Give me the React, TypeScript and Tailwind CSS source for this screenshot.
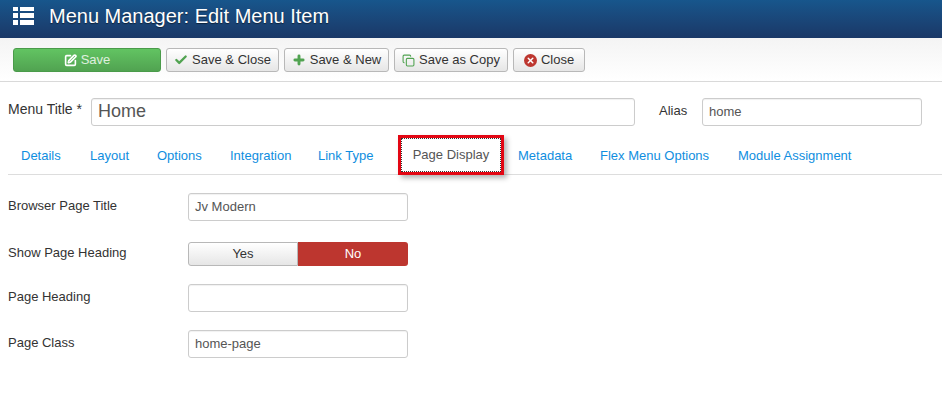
import { Check, Copy, Plus, SquarePen, X } from "lucide-react"

const font = { fontFamily: '"Liberation Sans", Arial, sans-serif' }

function ToolButton({ icon, label, className }: { icon: React.ReactNode; label: string; className: string }) {
  return (
    <button className={`h-6 flex items-center justify-center gap-1 rounded-[3px] border border-[#b8b8b8] bg-gradient-to-b from-white to-[#e6e6e6] text-[13px] text-[#333] ${className}`}>
      {icon}
      <span>{label}</span>
    </button>
  )
}

function Row({ label, children, className }: { label: string; children: React.ReactNode; className: string }) {
  return (
    <div className={`flex items-center ${className}`}>
      <label className="w-[180px] text-[13px] text-[#333] -mt-[3px]">{label}</label>
      {children}
    </div>
  )
}

function Field({ value, className }: { value: string; className: string }) {
  return (
    <div className={`h-7 flex items-center rounded-[3px] border border-[#ccc] bg-white shadow-[inset_0_1px_1px_rgba(0,0,0,0.06)] px-[6px] text-[#555] ${className}`}>
      {value}
    </div>
  )
}

const tabs = [
  { label: "Details", w: "w-[69px]" },
  { label: "Layout", w: "w-[67px]" },
  { label: "Options", w: "w-[73px]" },
  { label: "Integration", w: "w-[88px]" },
  { label: "Link Type", w: "w-[85px]" },
]

export default function App() {
  return (
    <div className="w-[942px] h-[401px] bg-white overflow-hidden" style={font}>
      <header className="h-[38px] flex items-center bg-gradient-to-b from-[#17568c] to-[#1a3867] pl-[13px]">
        <svg width="21" height="18" viewBox="0 0 21 18" className="-mt-[6px]" fill="#fff">
          <rect x="0" y="0" width="5" height="4" />
          <rect x="7" y="0" width="14" height="4" />
          <rect x="0" y="6" width="5" height="5" />
          <rect x="7" y="6" width="14" height="5" />
          <rect x="0" y="13" width="5" height="5" />
          <rect x="7" y="13" width="14" height="5" />
        </svg>
        <h1 className="ml-[15px] -mt-[6px] text-[20px] text-white [text-shadow:0_1px_1px_rgba(0,0,0,0.5)]">Menu Manager: Edit Menu Item</h1>
      </header>

      <div className="h-[44px] flex items-center gap-[5px] pl-[13px] pt-[1px] bg-gradient-to-b from-[#f4f4f4] to-white border-b border-[#d9d9d9]">
        <button className="w-[148px] h-6 flex items-center justify-center gap-1 rounded-[3px] border border-[#4a9b4a] bg-gradient-to-b from-[#62c462] to-[#51a351] text-[13px] text-white/80">
          <SquarePen size={13} strokeWidth={3} color="#fff" />
          <span>Save</span>
        </button>
        <ToolButton className="w-[113px]" label="Save & Close" icon={<Check size={14} strokeWidth={4} color="#51a351" />} />
        <ToolButton className="w-[105px]" label="Save & New" icon={<Plus size={14} strokeWidth={5} color="#51a351" />} />
        <ToolButton className="w-[114px]" label="Save as Copy" icon={<Copy size={13} strokeWidth={2} color="#51a351" />} />
        <ToolButton className="w-[72px]" label="Close" icon={
          <span className="w-[13px] h-[13px] rounded-full bg-[#bd362f] flex items-center justify-center">
            <X size={9} strokeWidth={4} color="#fff" />
          </span>
        } />
      </div>

      <div className="h-[56px] flex items-center pl-2 pt-[3px]">
        <label className="w-[83px] text-[14px] text-[#333] -mt-[4px]">Menu Title *</label>
        <Field value="Home" className="w-[544px] text-[18px] !text-[#555]" />
        <label className="ml-[24px] w-[43px] text-[13px] text-[#333] -mt-[2px]">Alias</label>
        <Field value="home" className="w-[220px] text-[13px]" />
      </div>

      <div className="ml-2 h-[38px] flex items-center border-b border-[#ddd] text-[13px] text-[#0f8ee0] pl-[13px] -mt-[1px]">
        {tabs.map((t) => (
          <span key={t.label} className={`${t.w} shrink-0`}>{t.label}</span>
        ))}
        <span className="relative -ml-[5px] w-[106px] h-[40px] shrink-0 flex items-center justify-center border-[3px] border-[#e30613] text-[#555] shadow-[3px_3px_5px_rgba(0,0,0,0.3)] bg-white -mt-[1px]">
          <span className="absolute inset-0 border border-dotted border-[#333]" />
          Page Display
        </span>
        <span className="ml-[14px] w-[82px] shrink-0">Metadata</span>
        <span className="w-[138px] shrink-0">Flex Menu Options</span>
        <span className="shrink-0">Module Assignment</span>
      </div>

      <div className="pl-2 pt-[18px]">
        <Row label="Browser Page Title" className="h-7">
          <Field value="Jv Modern" className="w-[220px] text-[13px]" />
        </Row>
        <Row label="Show Page Heading" className="h-6 mt-[21px]">
          <div className="w-[220px] h-6 flex text-[13px]">
            <span className="w-[110px] flex items-center justify-center rounded-l-[3px] border border-[#b8b8b8] bg-gradient-to-b from-white to-[#e6e6e6] text-[#333]">Yes</span>
            <span className="w-[110px] flex items-center justify-center rounded-r-[3px] bg-[#bd362f] text-white">No</span>
          </div>
        </Row>
        <Row label="Page Heading" className="h-7 mt-[18px]">
          <Field value="" className="w-[220px] text-[13px]" />
        </Row>
        <Row label="Page Class" className="h-7 mt-[18px]">
          <Field value="home-page" className="w-[220px] text-[13px]" />
        </Row>
      </div>
    </div>
  )
}
